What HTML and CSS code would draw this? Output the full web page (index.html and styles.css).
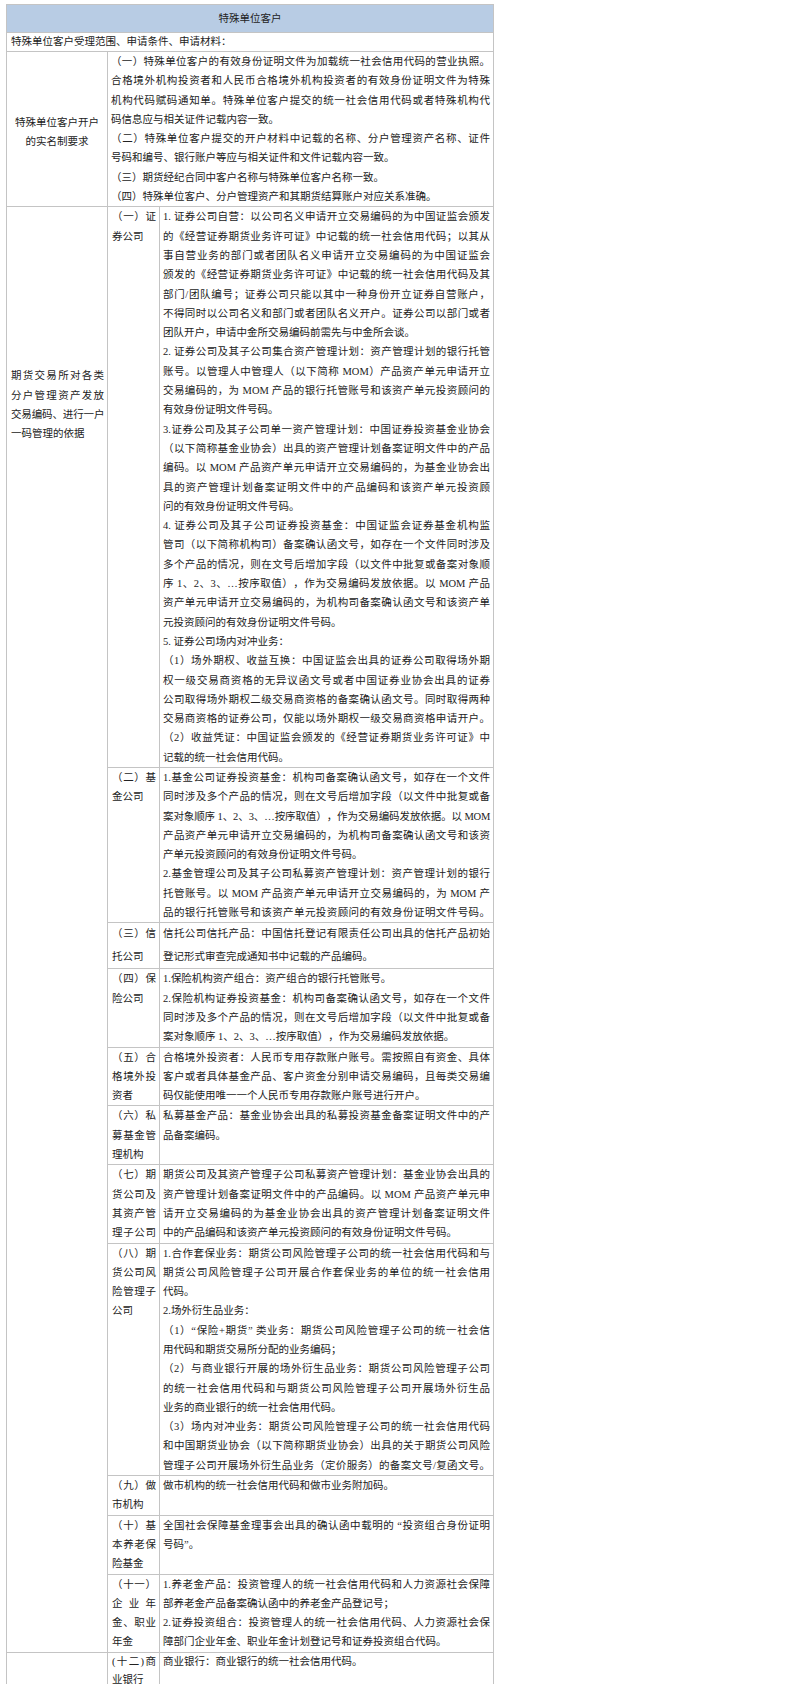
FILE: index.html
```html
<!DOCTYPE html>
<html lang="zh-CN">
<head>
<meta charset="utf-8">
<title>特殊单位客户</title>
<link rel="stylesheet" href="styles.css">
</head>
<body>
<div class="page">
<table class="sheet">
<colgroup><col class="c1"><col class="c2"><col class="c3"></colgroup>
<tr class="head"><td colspan="3">特殊单位客户</td></tr>
<tr><td colspan="3" class="intro">特殊单位客户受理范围、申请条件、申请材料：</td></tr>
<tr>
<td class="lbl-center">特殊单位客户开户<br>的实名制要求</td>
<td colspan="2" class="c">
<span class="j">（一）特殊单位客户的有效身份证明文件为加载统一社会信用代码的营业执照。</span>
<span class="j">合格境外机构投资者和人民币合格境外机构投资者的有效身份证明文件为特殊</span>
<span class="j">机构代码赋码通知单。特殊单位客户提交的统一社会信用代码或者特殊机构代</span>
<span>码信息应与相关证件记载内容一致。</span>
<span class="j">（二）特殊单位客户提交的开户材料中记载的名称、分户管理资产名称、证件</span>
<span>号码和编号、银行账户等应与相关证件和文件记载内容一致。</span>
<span>（三）期货经纪合同中客户名称与特殊单位客户名称一致。</span>
<span>（四）特殊单位客户、分户管理资产和其期货结算账户对应关系准确。</span>
</td>
</tr>
<tr>
<td rowspan="11" class="lbl-side"><span class="j">期货交易所对各类</span><span class="j">分户管理资产发放</span><span class="j tight">交易编码、进行一户</span><span>一码管理的依据</span></td>
<td class="c sub"><span class="j">（一）证</span><span>券公司</span></td>
<td class="c">
<span class="j">1. 证券公司自营：以公司名义申请开立交易编码的为中国证监会颁发</span>
<span class="j">的《经营证券期货业务许可证》中记载的统一社会信用代码；以其从</span>
<span class="j">事自营业务的部门或者团队名义申请开立交易编码的为中国证监会</span>
<span class="j">颁发的《经营证券期货业务许可证》中记载的统一社会信用代码及其</span>
<span class="j">部门/团队编号；证券公司只能以其中一种身份开立证券自营账户，</span>
<span class="j">不得同时以公司名义和部门或者团队名义开户。证券公司以部门或者</span>
<span>团队开户，申请中金所交易编码前需先与中金所会谈。</span>
<span class="j">2. 证券公司及其子公司集合资产管理计划：资产管理计划的银行托管</span>
<span class="j">账号。以管理人中管理人（以下简称 MOM）产品资产单元申请开立</span>
<span class="j">交易编码的，为 MOM 产品的银行托管账号和该资产单元投资顾问的</span>
<span>有效身份证明文件号码。</span>
<span class="j">3.证券公司及其子公司单一资产管理计划：中国证券投资基金业协会</span>
<span class="j">（以下简称基金业协会）出具的资产管理计划备案证明文件中的产品</span>
<span class="j">编码。以 MOM 产品资产单元申请开立交易编码的，为基金业协会出</span>
<span class="j">具的资产管理计划备案证明文件中的产品编码和该资产单元投资顾</span>
<span>问的有效身份证明文件号码。</span>
<span class="j">4. 证券公司及其子公司证券投资基金：中国证监会证券基金机构监</span>
<span class="j">管司（以下简称机构司）备案确认函文号，如存在一个文件同时涉及</span>
<span class="j">多个产品的情况，则在文号后增加字段（以文件中批复或备案对象顺</span>
<span class="j">序 1、2、3、…按序取值），作为交易编码发放依据。以 MOM 产品</span>
<span class="j">资产单元申请开立交易编码的，为机构司备案确认函文号和该资产单</span>
<span>元投资顾问的有效身份证明文件号码。</span>
<span>5. 证券公司场内对冲业务：</span>
<span class="j">（1）场外期权、收益互换：中国证监会出具的证券公司取得场外期</span>
<span class="j">权一级交易商资格的无异议函文号或者中国证券业协会出具的证券</span>
<span class="j">公司取得场外期权二级交易商资格的备案确认函文号。同时取得两种</span>
<span class="j">交易商资格的证券公司，仅能以场外期权一级交易商资格申请开户。</span>
<span class="j">（2）收益凭证：中国证监会颁发的《经营证券期货业务许可证》中</span>
<span>记载的统一社会信用代码。</span>
</td>
</tr>
<tr>
<td class="c sub"><span class="j">（二）基</span><span>金公司</span></td>
<td class="c">
<span class="j">1.基金公司证券投资基金：机构司备案确认函文号，如存在一个文件</span>
<span class="j">同时涉及多个产品的情况，则在文号后增加字段（以文件中批复或备</span>
<span class="j tight">案对象顺序 1、2、3、…按序取值），作为交易编码发放依据。以 MOM</span>
<span class="j">产品资产单元申请开立交易编码的，为机构司备案确认函文号和该资</span>
<span>产单元投资顾问的有效身份证明文件号码。</span>
<span class="j">2.基金管理公司及其子公司私募资产管理计划：资产管理计划的银行</span>
<span class="j">托管账号。以 MOM 产品资产单元申请开立交易编码的，为 MOM 产</span>
<span class="j">品的银行托管账号和该资产单元投资顾问的有效身份证明文件号码。</span>
</td>
</tr>
<tr class="loose">
<td class="c sub"><span class="j">（三）信</span><span>托公司</span></td>
<td class="c">
<span class="j">信托公司信托产品：中国信托登记有限责任公司出具的信托产品初始</span>
<span>登记形式审查完成通知书中记载的产品编码。</span>
</td>
</tr>
<tr>
<td class="c sub"><span class="j">（四）保</span><span>险公司</span></td>
<td class="c">
<span>1.保险机构资产组合：资产组合的银行托管账号。</span>
<span class="j">2.保险机构证券投资基金：机构司备案确认函文号，如存在一个文件</span>
<span class="j">同时涉及多个产品的情况，则在文号后增加字段（以文件中批复或备</span>
<span>案对象顺序 1、2、3、…按序取值），作为交易编码发放依据。</span>
</td>
</tr>
<tr>
<td class="c sub"><span class="j">（五）合</span><span class="j">格境外投</span><span>资者</span></td>
<td class="c">
<span class="j">合格境外投资者：人民币专用存款账户账号。需按照自有资金、具体</span>
<span class="j">客户或者具体基金产品、客户资金分别申请交易编码，且每类交易编</span>
<span>码仅能使用唯一一个人民币专用存款账户账号进行开户。</span>
</td>
</tr>
<tr>
<td class="c sub"><span class="j">（六）私</span><span class="j">募基金管</span><span>理机构</span></td>
<td class="c">
<span class="j">私募基金产品：基金业协会出具的私募投资基金备案证明文件中的产</span>
<span>品备案编码。</span>
</td>
</tr>
<tr>
<td class="c sub"><span class="j">（七）期</span><span class="j">货公司及</span><span class="j">其资产管</span><span class="j">理子公司</span></td>
<td class="c">
<span class="j">期货公司及其资产管理子公司私募资产管理计划：基金业协会出具的</span>
<span class="j">资产管理计划备案证明文件中的产品编码。以 MOM 产品资产单元申</span>
<span class="j">请开立交易编码的为基金业协会出具的资产管理计划备案证明文件</span>
<span>中的产品编码和该资产单元投资顾问的有效身份证明文件号码。</span>
</td>
</tr>
<tr>
<td class="c sub"><span class="j">（八）期</span><span class="j">货公司风</span><span class="j">险管理子</span><span>公司</span></td>
<td class="c">
<span class="j">1.合作套保业务：期货公司风险管理子公司的统一社会信用代码和与</span>
<span class="j">期货公司风险管理子公司开展合作套保业务的单位的统一社会信用</span>
<span>代码。</span>
<span>2.场外衍生品业务：</span>
<span class="j">（1）“保险+期货” 类业务：期货公司风险管理子公司的统一社会信</span>
<span>用代码和期货交易所分配的业务编码；</span>
<span class="j">（2）与商业银行开展的场外衍生品业务：期货公司风险管理子公司</span>
<span class="j">的统一社会信用代码和与期货公司风险管理子公司开展场外衍生品</span>
<span>业务的商业银行的统一社会信用代码。</span>
<span class="j">（3）场内对冲业务：期货公司风险管理子公司的统一社会信用代码</span>
<span class="j">和中国期货业协会（以下简称期货业协会）出具的关于期货公司风险</span>
<span class="j">管理子公司开展场外衍生品业务（定价服务）的备案文号/复函文号。</span>
</td>
</tr>
<tr>
<td class="c sub"><span class="j">（九）做</span><span>市机构</span></td>
<td class="c">
<span>做市机构的统一社会信用代码和做市业务附加码。</span>
</td>
</tr>
<tr>
<td class="c sub"><span class="j">（十）基</span><span class="j">本养老保</span><span>险基金</span></td>
<td class="c">
<span class="j">全国社会保障基金理事会出具的确认函中载明的 “投资组合身份证明</span>
<span>号码”。</span>
</td>
</tr>
<tr>
<td class="c sub"><span class="j">（十一）</span><span class="j">企业年</span><span class="j">金、职业</span><span>年金</span></td>
<td class="c">
<span class="j">1.养老金产品：投资管理人的统一社会信用代码和人力资源社会保障</span>
<span>部养老金产品备案确认函中的养老金产品登记号；</span>
<span class="j">2.证券投资组合：投资管理人的统一社会信用代码、人力资源社会保</span>
<span>障部门企业年金、职业年金计划登记号和证券投资组合代码。</span>
</td>
</tr>
<tr class="last">
<td></td>
<td class="c sub"><span class="j">(十二)商</span><span>业银行</span></td>
<td class="c">
<span>商业银行：商业银行的统一社会信用代码。</span>
</td>
</tr>
</table>
</div>
</body>
</html>
```

FILE: styles.css
```css
html, body {
  margin: 0;
  padding: 0;
  background: #ffffff;
}

body {
  font-family: "Liberation Serif", "Noto Sans CJK SC", serif;
  font-size: 10.5px;
  color: #222222;
  text-spacing-trim: space-all;
}

.page {
  padding: 4px 0 0 6px;
}

.sheet {
  border-collapse: collapse;
  table-layout: fixed;
  width: 487px;
}

.c1 { width: 101px; }
.c2 { width: 52px; }
.c3 { width: 334px; }

.sheet td {
  border: 1px solid #c4c4c4;
  padding: 0 3px;
  line-height: 19.3px;
  vertical-align: top;
  text-align: left;
}

.sheet .head td {
  background: #b8cce4;
  height: 27px;
  text-align: center;
  vertical-align: middle;
  padding: 0;
}

.sheet td.intro {
  padding: 0 4px;
  line-height: 18px;
}

.sheet td.lbl-center {
  text-align: center;
  vertical-align: middle;
  padding: 6px 2px 0;
}

.sheet td.lbl-side {
  padding: 159px 3px 0 4px;
}

.lbl-side > span,
.c > span {
  display: block;
  white-space: nowrap;
}

.lbl-side > span.j,
.c > span.j {
  text-align: justify;
  text-align-last: justify;
}

.tight {
  letter-spacing: -0.25px;
}

.lbl-side > span.tight {
  letter-spacing: -0.4px;
}

.loose td {
  line-height: 22.5px;
}

.sheet td.sub {
  padding: 0 3px 0 4px;
}

.last td {
  line-height: 18px;
}
```
